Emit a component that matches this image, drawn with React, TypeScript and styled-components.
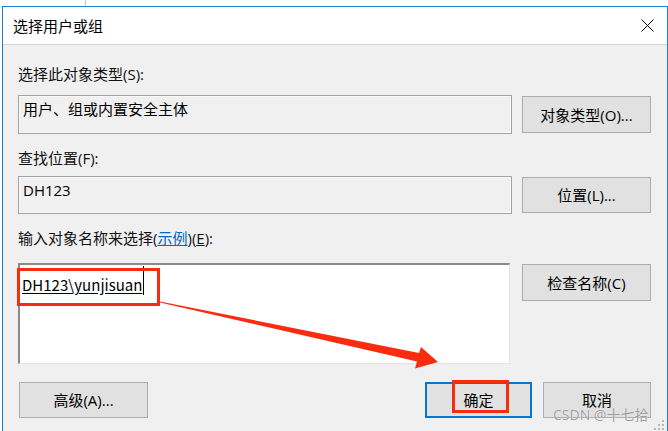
import React from "react";
import styled, { createGlobalStyle } from "styled-components";

const GlobalStyle = createGlobalStyle`
  html, body { margin: 0; padding: 0; background: #ffffff; }
  body { font-family: "Open Sans", "Noto Sans CJK SC", sans-serif; }
  #root { width: 668px; height: 431px; overflow: hidden; position: relative; }
  * { box-sizing: border-box; }
`;

const Page = styled.div`
  width: 668px;
  height: 431px;
  padding: 6px 0 0 2px;
  position: relative;
  overflow: hidden;
`;

const Window = styled.div`
  width: 666px;
  height: 440px;
  border: 1px solid #1883d7;
  border-bottom: none;
  background: #f0f0f0;
  display: flex;
  flex-direction: column;
`;

const TitleBar = styled.div`
  height: 38px;
  background: #ffffff;
  border-bottom: 1px solid #d5d5d5;
  display: flex;
  align-items: center;
  justify-content: space-between;
  padding: 0 13px 0 10px;
`;

const Title = styled.div`
  font-size: 15px;
  line-height: 20px;
  color: #000;
`;

const CloseIcon = styled.svg`
  width: 13px;
  height: 13px;
  display: block;
`;

const Body = styled.div`
  padding: 19px 16px 0 15px;
  display: flex;
  flex-direction: column;
`;

const Label = styled.div<{ $mt: number }>`
  margin-top: ${(p) => p.$mt}px;
  font-size: 15px;
  line-height: 20px;
  height: 20px;
  color: #111;
  white-space: nowrap;
`;

const Link = styled.span`
  color: #0066cc;
  text-decoration: underline;
`;

const Key = styled.span`
  text-decoration: underline;
`;

const Row = styled.div<{ $mt: number }>`
  margin-top: ${(p) => p.$mt}px;
  display: grid;
  grid-template-columns: 1fr 129px;
  column-gap: 10px;
  align-items: start;
`;

const ReadOnlyBox = styled.div<{ $h: number }>`
  height: ${(p) => p.$h}px;
  border: 1px solid #a3a3a3;
  box-shadow: inset 0 0 0 1px #f9f9f9;
  background: #f0f0f0;
  padding: 3px 0 0 4px;
  font-size: 15px;
  line-height: 20px;
  color: #000;
`;

const Button = styled.div<{ $h: number; $mt?: number; $w?: number; $default?: boolean }>`
  height: ${(p) => p.$h}px;
  margin-top: ${(p) => p.$mt ?? 0}px;
  ${(p) => (p.$w ? `width: ${p.$w}px;` : "")}
  border: ${(p) => (p.$default ? "2px solid #0078d7" : "1px solid #adadad")};
  background: #e1e1e1;
  display: flex;
  align-items: center;
  justify-content: center;
  font-size: 15px;
  line-height: 20px;
  color: #000;
  white-space: nowrap;
`;

const MultiBox = styled.div`
  height: 101px;
  width: 492px;
  background: #ffffff;
  border-top: 2px solid #8a8a8a;
  border-left: 2px solid #8a8a8a;
  border-right: 1px solid #e3e3e3;
  border-bottom: 1px solid #e3e3e3;
  padding: 1px 0 0 2px;
  display: flex;
  align-items: flex-start;
`;

const NameText = styled.span`
  margin-top: 9px;
  font-family: "Noto Sans CJK SC", sans-serif;
  font-size: 15px;
  line-height: 20px;
  color: #000;
  text-decoration: underline;
  text-underline-offset: 2px;
`;

const Caret = styled.span`
  width: 1px;
  height: 29px;
  background: #000;
  margin-left: 1px;
`;

const BottomRow = styled.div`
  margin-top: 18px;
  display: flex;
  align-items: center;
  padding-left: 1px;
`;

const Spacer = styled.div`
  flex: 1;
`;

const Gap = styled.div`
  width: 11px;
`;

const Overlay = styled.svg`
  position: absolute;
  left: 0;
  top: 0;
  width: 668px;
  height: 431px;
  pointer-events: none;
`;

const Watermark = styled.div`
  position: absolute;
  left: 553px;
  top: 406px;
  font-size: 14px;
  line-height: 18px;
  color: rgba(140, 140, 140, 0.85);
  text-shadow: 0 0 1px #ffffff;
  white-space: nowrap;
  pointer-events: none;
`;

export default function App() {
  return (
    <>
      <GlobalStyle />
      <Page>
        <Window>
          <TitleBar>
            <Title>选择用户或组</Title>
            <CloseIcon viewBox="0 0 13 13">
              <path d="M0.5 0.5 L12.5 12.5 M12.5 0.5 L0.5 12.5" stroke="#000" strokeWidth="1" fill="none" />
            </CloseIcon>
          </TitleBar>
          <Body>
            <Label $mt={0}>选择此对象类型(S):</Label>
            <Row $mt={11}>
              <ReadOnlyBox $h={39}>用户、组或内置安全主体</ReadOnlyBox>
              <Button $h={37} $mt={1}>对象类型(O)...</Button>
            </Row>
            <Label $mt={14}>查找位置(F):</Label>
            <Row $mt={8}>
              <ReadOnlyBox $h={38}>DH123</ReadOnlyBox>
              <Button $h={36} $mt={1}>位置(L)...</Button>
            </Row>
            <Label $mt={14}>
              输入对象名称来选择(<Link>示例</Link>)(<Key>E</Key>):
            </Label>
            <Row $mt={15}>
              <MultiBox>
                <NameText>DH123\yunjisuan</NameText>
                <Caret />
              </MultiBox>
              <Button $h={37} $mt={1}>检查名称(C)</Button>
            </Row>
            <BottomRow>
              <Button $h={36} $w={129}>高级(A)...</Button>
              <Spacer />
              <Button $h={36} $w={107} $default>确定</Button>
              <Gap />
              <Button $h={36} $w={108}>取消</Button>
            </BottomRow>
          </Body>
        </Window>
        <Overlay viewBox="0 0 668 431">
          <line x1="85.5" y1="0" x2="85.5" y2="6" stroke="#c8c8c8" strokeWidth="1" />
          <rect x="18.5" y="269.5" width="140" height="35" fill="none" stroke="#fa2c10" strokeWidth="3" />
          <rect x="453.5" y="381.5" width="54" height="30" fill="none" stroke="#fa2c10" strokeWidth="3" />
          <polygon
            points="160,301.5 419,353 421,347 438,362 415,368.5 417,361.5 160,302.5"
            fill="#fa2c10"
          />
          <g fill="#b5b5b5">
            <rect x="662" y="420" width="2" height="2" />
            <rect x="658" y="424" width="2" height="2" />
            <rect x="662" y="424" width="2" height="2" />
            <rect x="654" y="428" width="2" height="2" />
            <rect x="658" y="428" width="2" height="2" />
            <rect x="662" y="428" width="2" height="2" />
          </g>
        </Overlay>
        <Watermark>CSDN @十七拾</Watermark>
      </Page>
    </>
  );
}
